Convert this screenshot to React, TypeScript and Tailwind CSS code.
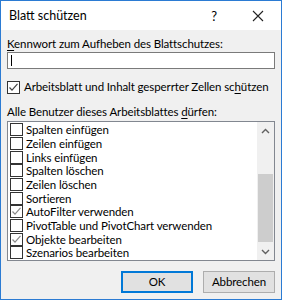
import React from 'react';

const FONT = { fontFamily: 'Lato, "Noto Sans", sans-serif' };

const items: { label: string; checked: boolean }[] = [
  { label: 'Spalten einfügen', checked: false },
  { label: 'Zeilen einfügen', checked: false },
  { label: 'Links einfügen', checked: false },
  { label: 'Spalten löschen', checked: false },
  { label: 'Zeilen löschen', checked: false },
  { label: 'Sortieren', checked: false },
  { label: 'AutoFilter verwenden', checked: true },
  { label: 'PivotTable und PivotChart verwenden', checked: false },
  { label: 'Objekte bearbeiten', checked: true },
  { label: 'Szenarios bearbeiten', checked: false },
];

const Check: React.FC<{ checked: boolean; color?: string }> = ({ checked, color = '#5a5a5a' }) => (
  <span className="w-[13px] h-[13px] border border-[#333333] bg-white flex items-center justify-center shrink-0">
    {checked && (
      <svg width="11" height="11" viewBox="0 0 11 11">
        <path d="M1.5 5.5 L4 8.2 L9.5 1.8" fill="none" stroke={color} strokeWidth="1.2" />
      </svg>
    )}
  </span>
);

export default function App() {
  return (
    <div
      className="w-[282px] h-[300px] border border-[#2b7bd3] bg-[#f0f0f0] flex flex-col text-[11.5px] tracking-[-0.1px] text-black leading-[16px]"
      style={FONT}
    >
      {/* Title bar */}
      <div className="h-[29px] bg-white flex items-center shrink-0">
        <span className="ml-[8px] text-[12.5px] tracking-normal">Blatt schützen</span>
        <span className="ml-auto w-[20px] text-center text-[13px]">?</span>
        <span className="ml-[24px] mr-[13px] w-[20px] flex justify-center">
          <svg width="12" height="12" viewBox="0 0 12 12">
            <path d="M1 1 L11 11 M11 1 L1 11" stroke="#222" strokeWidth="1.1" fill="none" />
          </svg>
        </span>
      </div>

      <div className="px-[6px] flex flex-col">
        <div className="mt-[6px] h-[16px] whitespace-nowrap">
          <span className="underline underline-offset-2">K</span>ennwort zum Aufheben des Blattschutzes:
        </div>
        <div className="h-[17px] border border-[#7a7a7a] bg-white flex items-center pl-[3px]">
          <span className="w-px h-[11px] bg-black" />
        </div>

        <div className="mt-[10px] h-[16px] flex items-center gap-[4px] whitespace-nowrap">
          <Check checked color="#444" />
          <span>
            Arbeitsblatt und Inhalt gesperrter Zellen sc<span className="underline underline-offset-2">h</span>ützen
          </span>
        </div>

        <div className="mt-[9px] h-[16px] whitespace-nowrap">
          Alle Benutzer dieses Arbeitsblattes <span className="underline underline-offset-2">d</span>ürfen:
        </div>

        <div className="mt-[1px] h-[140px] border border-[#828790] bg-white flex">
          <div className="flex-1 pt-[1px] pl-[2px]">
            {items.map((it) => (
              <div key={it.label} className="h-[13.67px] flex items-center gap-[3px] leading-[13px]">
                <Check checked={it.checked} color="#8a8a8a" />
                <span className="whitespace-nowrap">{it.label}</span>
              </div>
            ))}
          </div>
          <div className="w-[17px] bg-[#f0f0f0] flex flex-col items-center">
            <div className="h-[17px] flex items-center justify-center">
              <svg width="9" height="6" viewBox="0 0 9 6">
                <path d="M1 5 L4.5 1.5 L8 5" stroke="#606060" strokeWidth="1.4" fill="none" />
              </svg>
            </div>
            <div className="flex-1 w-full flex flex-col">
              <div className="h-[35px]" />
              <div className="h-[68px] mx-[1px] bg-[#cdcdcd]" />
              <div className="flex-1" />
            </div>
            <div className="h-[17px] flex items-center justify-center">
              <svg width="9" height="6" viewBox="0 0 9 6">
                <path d="M1 1 L4.5 4.5 L8 1" stroke="#606060" strokeWidth="1.4" fill="none" />
              </svg>
            </div>
          </div>
        </div>

        <div className="mt-[10px] flex justify-end gap-[10px]">
          <button className="w-[72px] h-[22px] border-2 border-[#0078d7] bg-[#e1e1e1] text-[11.5px]">OK</button>
          <button className="w-[72px] h-[22px] border border-[#adadad] bg-[#e1e1e1] text-[11.5px]">Abbrechen</button>
        </div>
      </div>
    </div>
  );
}
